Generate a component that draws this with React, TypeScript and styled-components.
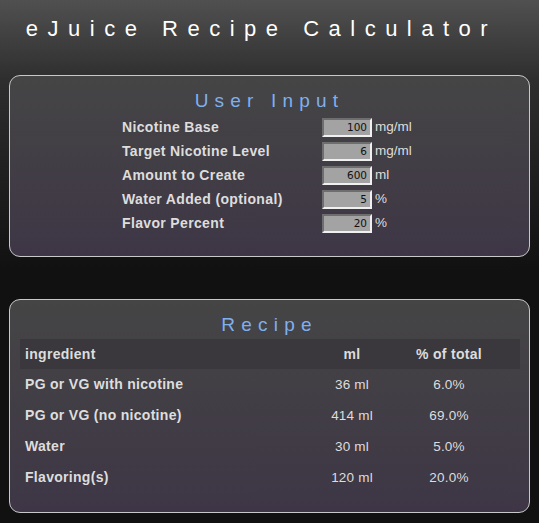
import React from "react";
import styled, { createGlobalStyle } from "styled-components";

const GlobalStyle = createGlobalStyle`
  html, body {
    margin: 0;
    padding: 0;
  }
  body {
    min-height: 100vh;
    background: linear-gradient(#505050 0px, #2e2e2e 80px, #111111 270px, #111111 100%);
    background-color: #111111;
    font-family: "Liberation Sans", Arial, sans-serif;
    color: #dddddd;
  }
`;

const Page = styled.div`
  padding: 0 9px 8px 9px;
`;

const Title = styled.h1`
  margin: 0;
  height: 75px;
  box-sizing: border-box;
  padding: 16px 16px 0 0;
  text-align: center;
  font-size: 22px;
  font-weight: normal;
  letter-spacing: 9.5px;
  color: #ffffff;
`;

const Panel = styled.section<{ $pad: number }>`
  border: 1px solid #c8c8c8;
  border-radius: 11px;
  background: linear-gradient(#454545, #3e3646);
  padding: 14px 10px ${(p) => p.$pad}px 10px;
  & + & {
    margin-top: 42px;
  }
`;

const PanelTitle = styled.h2`
  margin: 0 0 3px 0;
  text-align: center;
  font-size: 19px;
  font-weight: normal;
  letter-spacing: 6.2px;
  color: #7fb0ee;
  line-height: 22px;
`;

const Form = styled.div`
  display: grid;
  grid-template-columns: 200px 50px auto;
  margin-left: 102px;
`;

const Label = styled.label`
  font-size: 14px;
  font-weight: bold;
  letter-spacing: 0.35px;
  color: #dddddd;
  line-height: 24px;
  white-space: nowrap;
`;

const NumberInput = styled.input`
  box-sizing: border-box;
  width: 50px;
  height: 19px;
  align-self: center;
  margin: 0;
  padding: 0 3px 0 0;
  text-align: right;
  background: #a3a3a3;
  border: 2px solid;
  border-color: #6e6e6e #f0f0f0 #f0f0f0 #6e6e6e;
  font-family: "DejaVu Sans", Tahoma, sans-serif;
  font-size: 10.5px;
  color: #111111;
`;

const Unit = styled.span`
  font-size: 13.5px;
  color: #dddddd;
  line-height: 24px;
  padding-left: 3px;
`;

const Table = styled.div`
  display: grid;
  grid-template-columns: 306px 52px 142px;
  margin-top: 3px;
`;

const Cell = styled.div<{ $head?: boolean; $left?: boolean }>`
  height: ${(p) => (p.$head ? 30 : 31)}px;
  line-height: ${(p) => (p.$head ? 30 : 31)}px;
  background: ${(p) => (p.$head ? "#3a383c" : "transparent")};
  font-size: ${(p) => (p.$head || p.$left ? 14 : 13.5)}px;
  font-weight: ${(p) => (p.$head || p.$left ? "bold" : "normal")};
  letter-spacing: ${(p) => (p.$head || p.$left ? 0.3 : 0.2)}px;
  text-align: ${(p) => (p.$left ? "left" : "center")};
  padding-left: ${(p) => (p.$left ? 5 : 0)}px;
  white-space: nowrap;
  color: #dddddd;
`;

const inputs = [
  { label: "Nicotine Base", value: "100", unit: "mg/ml" },
  { label: "Target Nicotine Level", value: "6", unit: "mg/ml" },
  { label: "Amount to Create", value: "600", unit: "ml" },
  { label: "Water Added (optional)", value: "5", unit: "%" },
  { label: "Flavor Percent", value: "20", unit: "%" },
];

const recipe = [
  ["PG or VG with nicotine", "36 ml", "6.0%"],
  ["PG or VG (no nicotine)", "414 ml", "69.0%"],
  ["Water", "30 ml", "5.0%"],
  ["Flavoring(s)", "120 ml", "20.0%"],
];

export default function App() {
  return (
    <>
      <GlobalStyle />
      <Page>
        <Title>eJuice Recipe Calculator</Title>
        <Panel $pad={21}>
          <PanelTitle>User Input</PanelTitle>
          <Form>
            {inputs.map((row) => (
              <React.Fragment key={row.label}>
                <Label>{row.label}</Label>
                <NumberInput type="text" defaultValue={row.value} />
                <Unit>{row.unit}</Unit>
              </React.Fragment>
            ))}
          </Form>
        </Panel>
        <Panel $pad={19}>
          <PanelTitle>Recipe</PanelTitle>
          <Table>
            <Cell $head $left>ingredient</Cell>
            <Cell $head>ml</Cell>
            <Cell $head>% of total</Cell>
            {recipe.map((r) => (
              <React.Fragment key={r[0]}>
                <Cell $left>{r[0]}</Cell>
                <Cell>{r[1]}</Cell>
                <Cell>{r[2]}</Cell>
              </React.Fragment>
            ))}
          </Table>
        </Panel>
      </Page>
    </>
  );
}
